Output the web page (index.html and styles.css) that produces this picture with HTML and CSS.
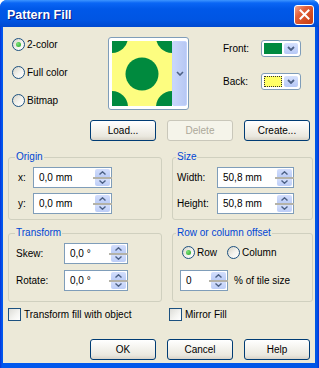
FILE: index.html
```html
<!DOCTYPE html>
<html lang="en">
<head>
  <meta charset="UTF-8">
  <meta name="viewport" content="width=device-width, initial-scale=1.0">
  <link rel="stylesheet" href="styles.css">
  <title>Pattern Fill</title>
</head>
<body>
  <div class="window">
    <div class="titlebar">
      <span class="title">Pattern Fill</span>
      <span class="close">
        <svg width="11" height="11" viewBox="0 0 11 11"><path d="M1.5 1.5L9.5 9.5M9.5 1.5L1.5 9.5" stroke="#fff" stroke-width="2" stroke-linecap="square"/></svg>
      </span>
    </div>
    <div class="client">
      <div class="top">
        <div class="modes">
          <label class="radio checked"><span class="dot"></span>2-color</label>
          <label class="radio"><span class="dot"></span>Full color</label>
          <label class="radio"><span class="dot"></span>Bitmap</label>
        </div>
        <div class="preview">
          <svg class="swatch" width="60" height="65" viewBox="0 0 60 65">
            <rect width="60" height="65" fill="#fdfd80"/>
            <g fill="#008a3e">
              <circle cx="0" cy="-4" r="16"/>
              <circle cx="60" cy="-4" r="16"/>
              <circle cx="0" cy="66" r="16"/>
              <circle cx="60" cy="66" r="16"/>
              <circle cx="30" cy="33" r="16.5"/>
            </g>
          </svg>
          <span class="preview-btn">
            <svg width="8" height="5" viewBox="0 0 8 5"><polyline points="1,1 4,4 7,1" fill="none" stroke="#4d6185" stroke-width="1.6"/></svg>
          </span>
        </div>
        <div class="colors">
          <div class="color-row">
            <span class="color-label">Front:</span>
            <span class="color-btn">
              <span class="chip front"></span>
              <span class="drop"><svg width="8" height="5" viewBox="0 0 8 5"><polyline points="1,1 4,4 7,1" fill="none" stroke="#4d6185" stroke-width="1.8"/></svg></span>
            </span>
          </div>
          <div class="color-row">
            <span class="color-label">Back:</span>
            <span class="color-btn">
              <span class="chip back"></span>
              <span class="drop"><svg width="8" height="5" viewBox="0 0 8 5"><polyline points="1,1 4,4 7,1" fill="none" stroke="#4d6185" stroke-width="1.8"/></svg></span>
            </span>
          </div>
        </div>
      </div>

      <div class="btn-row">
        <button>Load...</button>
        <button disabled>Delete</button>
        <button>Create...</button>
      </div>

      <div class="groups">
        <fieldset class="group origin">
          <legend>Origin</legend>
          <div class="field">
            <span class="lbl">x:</span>
            <span class="spin"><span class="val">0,0 mm</span><span class="arrows"><span class="up"><svg width="7" height="4" viewBox="0 0 7 4"><polyline points="0.5,3.5 3.5,0.8 6.5,3.5" fill="none" stroke="#4d6185" stroke-width="1.4"/></svg></span><span class="sep"></span><span class="down"><svg width="7" height="4" viewBox="0 0 7 4"><polyline points="0.5,0.5 3.5,3.2 6.5,0.5" fill="none" stroke="#4d6185" stroke-width="1.4"/></svg></span></span></span>
          </div>
          <div class="field">
            <span class="lbl">y:</span>
            <span class="spin"><span class="val">0,0 mm</span><span class="arrows"><span class="up"><svg width="7" height="4" viewBox="0 0 7 4"><polyline points="0.5,3.5 3.5,0.8 6.5,3.5" fill="none" stroke="#4d6185" stroke-width="1.4"/></svg></span><span class="sep"></span><span class="down"><svg width="7" height="4" viewBox="0 0 7 4"><polyline points="0.5,0.5 3.5,3.2 6.5,0.5" fill="none" stroke="#4d6185" stroke-width="1.4"/></svg></span></span></span>
          </div>
        </fieldset>

        <fieldset class="group size right">
          <legend>Size</legend>
          <div class="field">
            <span class="lbl">Width:</span>
            <span class="spin"><span class="val">50,8 mm</span><span class="arrows"><span class="up"><svg width="7" height="4" viewBox="0 0 7 4"><polyline points="0.5,3.5 3.5,0.8 6.5,3.5" fill="none" stroke="#4d6185" stroke-width="1.4"/></svg></span><span class="sep"></span><span class="down"><svg width="7" height="4" viewBox="0 0 7 4"><polyline points="0.5,0.5 3.5,3.2 6.5,0.5" fill="none" stroke="#4d6185" stroke-width="1.4"/></svg></span></span></span>
          </div>
          <div class="field">
            <span class="lbl">Height:</span>
            <span class="spin"><span class="val">50,8 mm</span><span class="arrows"><span class="up"><svg width="7" height="4" viewBox="0 0 7 4"><polyline points="0.5,3.5 3.5,0.8 6.5,3.5" fill="none" stroke="#4d6185" stroke-width="1.4"/></svg></span><span class="sep"></span><span class="down"><svg width="7" height="4" viewBox="0 0 7 4"><polyline points="0.5,0.5 3.5,3.2 6.5,0.5" fill="none" stroke="#4d6185" stroke-width="1.4"/></svg></span></span></span>
          </div>
        </fieldset>

        <fieldset class="group transform">
          <legend>Transform</legend>
          <div class="field">
            <span class="lbl">Skew:</span>
            <span class="spin"><span class="val">0,0 °</span><span class="arrows"><span class="up"><svg width="7" height="4" viewBox="0 0 7 4"><polyline points="0.5,3.5 3.5,0.8 6.5,3.5" fill="none" stroke="#4d6185" stroke-width="1.4"/></svg></span><span class="sep"></span><span class="down"><svg width="7" height="4" viewBox="0 0 7 4"><polyline points="0.5,0.5 3.5,3.2 6.5,0.5" fill="none" stroke="#4d6185" stroke-width="1.4"/></svg></span></span></span>
          </div>
          <div class="field">
            <span class="lbl">Rotate:</span>
            <span class="spin"><span class="val">0,0 °</span><span class="arrows"><span class="up"><svg width="7" height="4" viewBox="0 0 7 4"><polyline points="0.5,3.5 3.5,0.8 6.5,3.5" fill="none" stroke="#4d6185" stroke-width="1.4"/></svg></span><span class="sep"></span><span class="down"><svg width="7" height="4" viewBox="0 0 7 4"><polyline points="0.5,0.5 3.5,3.2 6.5,0.5" fill="none" stroke="#4d6185" stroke-width="1.4"/></svg></span></span></span>
          </div>
        </fieldset>

        <fieldset class="group offset right">
          <legend>Row or column offset</legend>
          <div class="offset-modes">
            <label class="radio checked first"><span class="dot"></span>Row</label>
            <label class="radio"><span class="dot"></span>Column</label>
          </div>
          <div class="field">
            <span class="spin"><span class="val">0</span><span class="arrows"><span class="up"><svg width="7" height="4" viewBox="0 0 7 4"><polyline points="0.5,3.5 3.5,0.8 6.5,3.5" fill="none" stroke="#4d6185" stroke-width="1.4"/></svg></span><span class="sep"></span><span class="down"><svg width="7" height="4" viewBox="0 0 7 4"><polyline points="0.5,0.5 3.5,3.2 6.5,0.5" fill="none" stroke="#4d6185" stroke-width="1.4"/></svg></span></span></span>
            <span class="unit">% of tile size</span>
          </div>
        </fieldset>
      </div>

      <div class="checks">
        <label class="check first"><span class="box"></span>Transform fill with object</label>
        <label class="check"><span class="box"></span>Mirror Fill</label>
      </div>

      <div class="btn-row bottom">
        <button>OK</button>
        <button>Cancel</button>
        <button>Help</button>
      </div>
    </div>
  </div>
</body>
</html>
```

FILE: styles.css
```css
body {
  margin: 0;
  font-family: "Liberation Sans", Arial, sans-serif;
  font-size: 10px;
  color: #000;
  background: #fff;
}

.window {
  width: 319px;
  height: 368px;
  display: flex;
  flex-direction: column;
  background: linear-gradient(90deg, #0831d9 0, #0058ee 2px, #0055e5 calc(100% - 2px), #0831d9 100%);
  border-radius: 7px 7px 0 0;
}

.titlebar {
  height: 27px;
  display: flex;
  align-items: center;
  justify-content: space-between;
  padding: 0 5px 0 7px;
  border-radius: 7px 7px 0 0;
  background: linear-gradient(#3d95ff 0, #0a66f5 3px, #0058e8 9px, #0055e3 20px, #0049d0 27px);
}

.title {
  padding-top: 2px;
  font-size: 12.5px;
  font-weight: bold;
  color: #fff;
  text-shadow: 1px 1px 0 #0a1883;
}

.close {
  width: 20px;
  height: 20px;
  margin-top: 2px;
  box-sizing: border-box;
  border: 1px solid #fff;
  border-radius: 3px;
  display: flex;
  align-items: center;
  justify-content: center;
  background: linear-gradient(135deg, #f3a68f 0, #e2603a 35%, #d24a1f 70%, #c63d16 100%);
}

.client {
  flex: 1;
  margin: 0 4px 5px 3px;
  background: #ece9d8;
  display: flex;
  flex-direction: column;
}

/* top area */
.top {
  display: flex;
  height: 83px;
}

.modes {
  width: 105px;
  box-sizing: border-box;
  padding: 11px 0 0 9px;
  display: flex;
  flex-direction: column;
  gap: 15px;
}

.radio {
  display: flex;
  align-items: center;
  gap: 2px;
  height: 13px;
}

.dot {
  width: 13px;
  height: 13px;
  box-sizing: border-box;
  border: 1px solid #1c5180;
  border-radius: 50%;
  background: linear-gradient(135deg, #d6d3c6 0, #f4f3ee 55%, #fff 100%);
  display: flex;
  align-items: center;
  justify-content: center;
}

.checked .dot::after {
  content: "";
  width: 5px;
  height: 5px;
  border-radius: 50%;
  background: radial-gradient(circle at 35% 35%, #7ee27a, #21a121);
}

.preview {
  margin-top: 10px;
  width: 81px;
  height: 73px;
  box-sizing: border-box;
  border: 1px solid #7f9db9;
  border-radius: 3px;
  background: #fff;
  padding: 3px 1px 3px 3px;
  display: flex;
}

.swatch {
  display: block;
}

.preview-btn {
  width: 15px;
  box-sizing: border-box;
  border: 1px solid #c3d3fd;
  border-radius: 2px;
  background: linear-gradient(90deg, #c9d7fa, #b7c8f4);
  display: flex;
  align-items: center;
  justify-content: center;
}

.colors {
  margin-left: 34px;
  padding-top: 13px;
  display: flex;
  flex-direction: column;
  gap: 16px;
}

.color-row {
  display: flex;
  align-items: center;
  height: 17px;
}

.color-label {
  width: 38px;
}

.color-btn {
  width: 40px;
  height: 17px;
  box-sizing: border-box;
  border: 1px solid #7f9db9;
  border-radius: 3px;
  background: #fff;
  padding: 2px;
  display: flex;
  gap: 2px;
}

.chip {
  flex: 1;
}

.chip.front {
  background: #008a3e;
}

.chip.back {
  background: #ffff66;
  outline: 1px dotted #333;
  outline-offset: -1px;
}

.drop {
  width: 14px;
  border-radius: 2px;
  background: linear-gradient(#d6e1fd, #b6c8f6);
  display: flex;
  align-items: center;
  justify-content: center;
}

/* buttons */
.btn-row {
  margin-top: 10px;
  padding-left: 87px;
  display: flex;
  gap: 11px;
}

.btn-row.bottom {
  margin-top: 18px;
}

button {
  width: 66px;
  height: 21px;
  padding: 0;
  font: inherit;
  color: #000;
  border: 1px solid #003c74;
  border-radius: 3px;
  background: linear-gradient(#fff 0, #f5f4ef 40%, #eae8df 80%, #d8d3c8 100%);
}

button:disabled {
  color: #aca899;
  border-color: #c9c7ba;
  background: #f5f4ea;
}

/* group boxes */
.groups {
  margin-top: 10px;
  padding-left: 5px;
  display: grid;
  grid-template-columns: 154px 141px;
  column-gap: 10px;
  row-gap: 7px;
}

.group {
  margin: 0;
  padding: 4px 0 5px 0;
  min-width: 0;
  border: 1px solid #d0d0bf;
  border-radius: 3px;
  display: flex;
  flex-direction: column;
  gap: 5px;
}

.group legend {
  margin-left: 6px;
  padding: 0 1px;
  line-height: 12px;
  color: #0046d5;
}

.group.right legend {
  margin-left: 3px;
}

.field {
  display: flex;
  align-items: center;
  height: 21px;
}

.origin .field {
  padding-left: 9px;
}

.origin .lbl {
  width: 15px;
}

.origin .spin {
  width: 79px;
}

.size .field {
  padding-left: 4px;
}

.size .lbl {
  width: 40px;
}

.size .spin {
  width: 77px;
}

.transform {
  gap: 6px;
  padding-bottom: 10px;
}

.transform .field {
  padding-left: 7px;
}

.transform .lbl {
  width: 48px;
}

.transform .spin {
  width: 64px;
}

.offset {
  padding-top: 7px;
  gap: 11px;
}

.offset-modes {
  display: flex;
  padding-left: 9px;
}

.offset-modes .first {
  width: 45px;
}

.offset .field {
  padding-left: 7px;
  gap: 6px;
}

.offset .spin {
  width: 48px;
}

.spin {
  height: 21px;
  box-sizing: border-box;
  border: 1px solid #7f9db9;
  background: #fff;
  display: flex;
}

.val {
  flex: 1;
  padding-left: 5px;
  line-height: 19px;
}

.arrows {
  width: 15px;
  margin: 1px 1px 1px 0;
  display: flex;
  flex-direction: column;
}

.up,
.down {
  flex: 1;
  display: flex;
  align-items: center;
  justify-content: center;
  background: linear-gradient(#d3defc, #bccdf7);
}

.up {
  border-radius: 2px 2px 0 0;
}

.down {
  border-radius: 0 0 2px 2px;
}

.sep {
  height: 2px;
  margin: 0 -2px;
  background: #b4b2a8;
}

/* checkboxes */
.checks {
  margin-top: 6px;
  padding-left: 5px;
  display: flex;
}

.check {
  display: flex;
  align-items: center;
  gap: 3px;
  height: 13px;
}

.check.first {
  width: 161px;
}

.box {
  width: 13px;
  height: 13px;
  box-sizing: border-box;
  border: 1px solid #1c5180;
  background: linear-gradient(135deg, #dcdcd7 0, #f5f5f2 60%, #fff 100%);
}
```
